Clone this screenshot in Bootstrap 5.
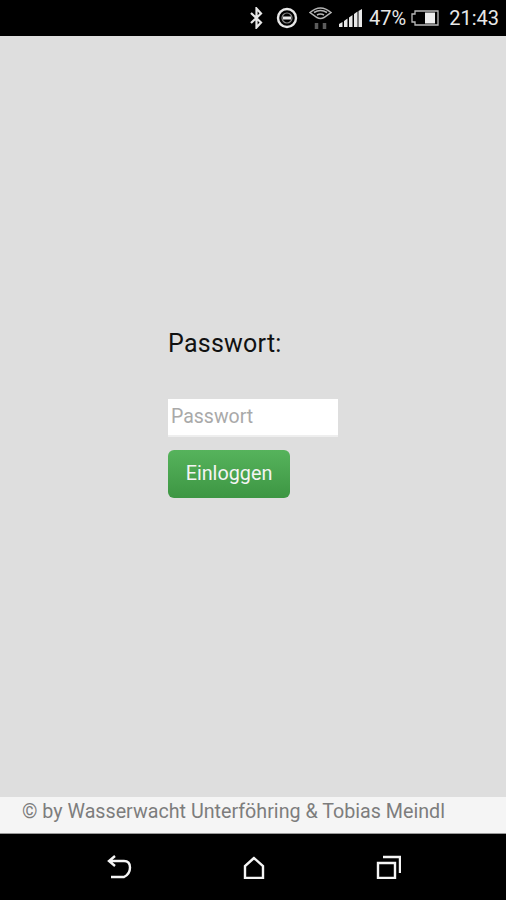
<!DOCTYPE html>
<html lang="de">
<head>
  <meta charset="UTF-8">
  <meta name="viewport" content="width=device-width, initial-scale=1">
  <title>Login</title>
  <link rel="stylesheet" href="https://cdn.jsdelivr.net/npm/bootstrap@5.3.0/dist/css/bootstrap.min.css">
  <style>
    html, body { height: 100%; }
    body {
      font-family: Roboto, "Liberation Sans", sans-serif;
      background-color: #000;
      height: 900px;
      overflow: hidden;
    }
    .status-bar {
      height: 36px;
      padding: 0 7px 0 0;
      color: #e8e8e8;
    }
    .status-bar .icon-bt { margin-right: 13px; }
    .status-bar .icon-dnd { margin-right: 11px; }
    .status-bar .icon-wifi { margin-right: 7px; }
    .status-bar .icon-signal { margin-right: 7px; }
    .status-bar .pct { font-size: 20px; margin-right: 5px; }
    .status-bar .clock { font-size: 20px; margin-left: 10px; }
    .app-area {
      background-color: #dedede;
      height: 761px;
      padding-top: 293px;
      padding-left: 168px;
    }
    .pw-label {
      font-size: 25px;
      line-height: 30px;
      color: #111;
      margin-bottom: 40px;
      letter-spacing: .25px;
    }
    .pw-input {
      display: block;
      width: 170px;
      height: 38px;
      border: 0;
      border-bottom: 2px solid #eee;
      border-radius: 0;
      background: #fff;
      padding: 0 3px 2px;
      font-size: 19.500px;
      margin-bottom: 13px;
      outline: none;
    }
    .pw-input::placeholder { color: #a9a9a9; opacity: 1; }
    .login-btn {
      width: 122px;
      height: 48px;
      padding: 0;
      font-size: 19.800px;
      color: #f4f4f4;
      border: 0;
      border-radius: 6px;
      background: linear-gradient(to bottom, #56b35c, #3d9643);
    }
    .foot-bar {
      height: 37px;
      background-color: #f5f5f5;
      border-bottom: 1px solid #999;
      padding-left: 22px;
      font-size: 19.700px;
      line-height: 30px;
      color: #7d7d7d;
      white-space: nowrap;
    }
    .nav-keys { height: 66px; }
    .nav-keys svg { display: block; }
    .nav-keys .key-back { margin-left: 107px; }
    .nav-keys .key-home { margin-left: 111px; }
    .nav-keys .key-recent { margin-left: 111px; }
  </style>
</head>
<body>
  <!-- Android status bar -->
  <div class="status-bar d-flex align-items-center justify-content-end">
    <svg class="icon-bt" width="13" height="22" viewBox="0 0 13 22" fill="none" stroke="#e8e8e8" stroke-width="2.200"><path d="M1 6l10 9.500-4.500 5V1.500l4.500 5L1 16"/></svg>
    <svg class="icon-dnd" width="22" height="22" viewBox="0 0 22 22" fill="none" stroke="#e8e8e8"><circle cx="11" cy="11" r="9" stroke-width="2.400"/><circle cx="11" cy="11" r="5" stroke-width="1.200" stroke="#888"/><path d="M7 11h8" stroke-width="3"/></svg>
    <svg class="icon-wifi" width="23" height="24" viewBox="0 0 23 24" fill="none" stroke="#b5b5b5" stroke-width="1.500"><path d="M1 6.500Q11.500-2.500 22 6.500L15 11.500Q11.500 13.500 8 11.500z"/><path d="M5 6.500q6.500-4 13 0M8 9q3.500-2 7 0"/><path d="M7.500 17v6M15.500 17v6" stroke="#5c5c5c" stroke-width="3.500"/></svg>
    <svg class="icon-signal" width="23" height="18" viewBox="0 0 23 18" fill="#e8e8e8"><path d="M0 15l3.500-2v5H0zM5 12l3.500-2.500V18H5zM10 8.500L13.500 6v12H10zM15 5l3.500-2.500V18H15zM19.500 2L23 0v18h-3.500z"/></svg>
    <span class="pct">47%</span>
    <svg width="28" height="16" viewBox="0 0 28 16"><path d="M4 1h23v14H4V12H1V4h3z" fill="none" stroke="#bbb" stroke-width="1.300"/><rect x="14" y="2.500" width="10" height="11" fill="#eee"/></svg>
    <span class="clock">21:43</span>
  </div>

  <main class="app-area">
    <div class="pw-label">Passwort:</div>
    <input class="pw-input" type="password" placeholder="Passwort">
    <button class="btn login-btn" type="button">Einloggen</button>
  </main>

  <footer class="foot-bar">© by Wasserwacht Unterföhring &amp; Tobias Meindl</footer>

  <!-- Android nav keys -->
  <div class="nav-keys d-flex align-items-center">
    <svg class="key-back" width="25" height="24" viewBox="0 0 25 24" fill="none" stroke="#f5f5f5" stroke-width="2.400"><path d="M8 1L2 6l6 5M2 6h15q6 0 6 6.500T17 22H4"/></svg>
    <svg class="key-home" width="22" height="23" viewBox="0 0 22 23" fill="none" stroke="#f5f5f5" stroke-width="2.400"><path d="M11 2L2 10v12h18V10z"/></svg>
    <svg class="key-recent" width="25" height="24" viewBox="0 0 25 24" fill="none" stroke="#f5f5f5" stroke-width="2.400"><path d="M2 8h17v15H2zM7 2h17v16"/></svg>
  </div>

  <script src="https://cdn.jsdelivr.net/npm/bootstrap@5.3.0/dist/js/bootstrap.bundle.min.js"></script>
</body>
</html>
